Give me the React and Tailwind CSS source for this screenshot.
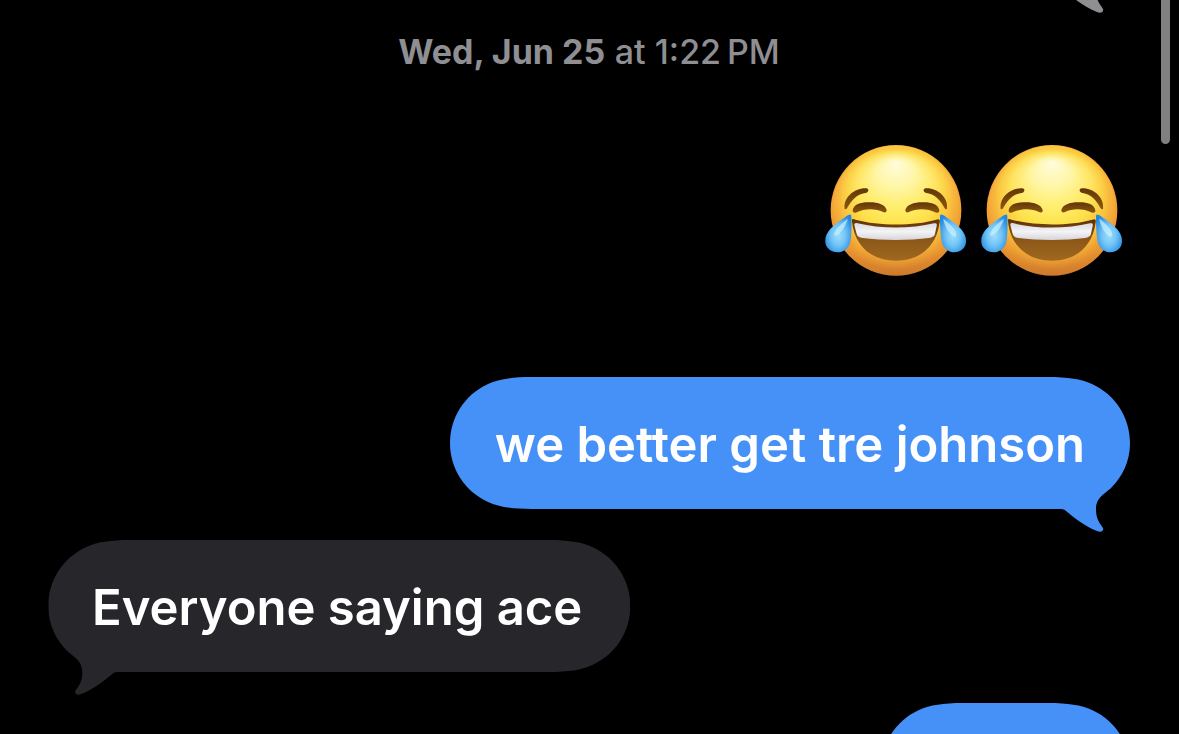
import clsx from 'clsx';

const messages = [
  { id: 1, text: 'we better get tre johnson', sent: true, tail: true },
  { id: 2, text: 'Everyone saying ace', sent: false, tail: true },
  { id: 3, text: '', sent: true, tail: false },
];

function RoundCap({ className }) {
  return (
    <svg viewBox="0 0 88 132" aria-hidden="true" className={clsx('absolute top-0 h-[132px] w-[88px] fill-current', className)}>
      <path d="M88 0H82C62 0 49 2 38 7C14 18 0 41 0 66C0 91 14 114 38 125C49 130 62 132 82 132H88Z" />
    </svg>
  );
}

function TailCap({ className }) {
  return (
    <svg viewBox="0 0 88 156" aria-hidden="true" className={clsx('absolute top-0 h-[156px] w-[88px] fill-current', className)}>
      <path d="M0 0H6C26 0 39 2 50 7C74 18 88 41 88 66C88 85 80 100 69 111C64 116 54 120 54 132C54 143 58 146 61 151C62 154 59 156 55 154C42 149 30 139 24 134C22 132 20 132 16 132H0Z" />
    </svg>
  );
}

function Bubble({ text, sent, tail, className }) {
  return (
    <div className={clsx('relative h-[132px] w-fit min-w-[249px]', sent ? 'px-[45px]' : 'pr-12 pl-11', className)}>
      <div className={clsx('absolute inset-0', !sent && '-scale-x-100')}>
        <RoundCap className="left-0" />
        <div className="absolute inset-x-[87px] inset-y-0 bg-current" />
        {tail ? <TailCap className="right-0" /> : <RoundCap className="right-0 -scale-x-100" />}
      </div>
      <p className="relative pt-9 text-[49px] leading-[64px] font-semibold whitespace-nowrap text-white">{text}</p>
    </div>
  );
}

function JoyEmoji() {
  return (
    <svg viewBox="29 41 432 399" role="img" aria-label="Face with tears of joy" className="h-[133px] w-36">
      <defs>
        <linearGradient id="face" x1="0" y1="0" x2="0" y2="1">
          <stop offset="0" stopColor="#f9b440" />
          <stop offset="0.45" stopColor="#f3a136" />
          <stop offset="0.8" stopColor="#e8922f" />
          <stop offset="1" stopColor="#cf7a2c" />
        </linearGradient>
        <radialGradient id="glow" cx="0.5" cy="0.42" r="0.56">
          <stop offset="0" stopColor="#ffe845" />
          <stop offset="0.5" stopColor="#fddc42" />
          <stop offset="0.75" stopColor="#fbc83f" stopOpacity="0.9" />
          <stop offset="1" stopColor="#f4aa38" stopOpacity="0" />
        </radialGradient>
        <radialGradient id="shine" cx="0.5" cy="0.5" r="0.5" fx="0.5" fy="0.16">
          <stop offset="0" stopColor="#fffce0" />
          <stop offset="0.35" stopColor="#fff8b0" stopOpacity="0.9" />
          <stop offset="0.7" stopColor="#fff077" stopOpacity="0.6" />
          <stop offset="1" stopColor="#ffe550" stopOpacity="0" />
        </radialGradient>
        <linearGradient id="brown" x1="0" y1="0" x2="0" y2="1">
          <stop offset="0" stopColor="#623607" />
          <stop offset="1" stopColor="#8b570f" />
        </linearGradient>
        <linearGradient id="mouth" x1="0" y1="0" x2="0" y2="1">
          <stop offset="0" stopColor="#5c3008" />
          <stop offset="0.5" stopColor="#8c5718" />
          <stop offset="1" stopColor="#a0681f" />
        </linearGradient>
        <linearGradient id="teeth" x1="0" y1="0" x2="0" y2="1">
          <stop offset="0" stopColor="#d9d9df" />
          <stop offset="0.5" stopColor="#f4f4f6" />
          <stop offset="1" stopColor="#d6d4da" />
        </linearGradient>
        <radialGradient id="tear" cx="0.5" cy="0.55" r="0.6">
          <stop offset="0" stopColor="#9edefb" />
          <stop offset="0.45" stopColor="#73c5f7" />
          <stop offset="1" stopColor="#2388df" />
        </radialGradient>
      </defs>
      <circle cx="245" cy="240" r="196" fill="url(#face)" />
      <circle cx="245" cy="236" r="190" fill="url(#glow)" />
      <ellipse cx="245" cy="184" rx="170" ry="130" fill="url(#shine)" />
      <g fill="url(#brown)">
        <path d="M91 235C86 202 121 172 156 174C164 175 164 184 157 187C127 190 111 210 98 234C96 237 92 238 91 235Z" />
        <path d="M398 235C403 202 369 172 334 174C326 175 326 184 333 187C362 190 379 210 391 234C393 237 397 238 398 235Z" />
        <path d="M115 240C118 220 143 215 166 216C192 216 213 224 217 239C218 246 211 248 206 245C182 233 151 234 124 247C119 249 114 246 115 240Z" />
        <path d="M375 240C372 220 347 215 324 216C298 216 277 224 273 239C272 246 279 248 284 245C308 233 339 234 366 247C371 249 376 246 375 240Z" />
      </g>
      <path d="M113 274C111 267 115 264 123 268C192 287 300 287 366 268C374 264 378 268 376 276C366 352 314 391 245 391C176 391 122 352 113 274Z" fill="url(#mouth)" />
      <path d="M120 285C119 279 123 277 130 279C197 296 291 296 359 279C366 277 369 280 367 287L361 314C358 320 350 322 344 323C287 331 201 331 144 323C135 321 129 319 127 311Z" fill="url(#teeth)" />
      <g fill="url(#tear)">
        <path d="M105 253C109 251 111 254 111 259C112 284 112 312 108 334C101 371 50 377 35 345C24 310 56 286 84 266C94 258 99 255 105 253Z" />
        <path d="M383 253C379 251 377 254 377 259C377 284 378 312 382 334C390 371 439 377 453 345C464 310 432 286 404 266C394 258 389 255 383 253Z" />
      </g>
      <g fill="#c9f1fd" opacity="0.7">
        <path d="M101 265C94 286 79 313 61 317C54 305 76 283 101 265Z" />
        <path d="M387 265C390 286 403 313 423 320C433 306 411 283 387 265Z" />
      </g>
    </svg>
  );
}

export default function App() {
  return (
    <main className="relative h-screen overflow-hidden bg-black pr-[49px] pl-12 font-['Inter',sans-serif]">
      {/* Previous message, mostly scrolled away */}
      <Bubble sent tail className="-mt-[142px] ml-auto text-[#8e8e93]" />

      <time className="mt-10 block text-center text-[34px] leading-[44px] text-[#8e8e93]">
        <span className="font-bold">Wed, Jun 25</span>{' '}
        <span className="font-medium">at 1:22{'\u202f'}PM</span>
      </time>

      <div className="mt-[70px] flex justify-end gap-3 pr-1.5">
        <JoyEmoji />
        <JoyEmoji />
      </div>

      <div className="mt-[100px] flex flex-col gap-[31px]">
        {messages.map((msg) => (
          <Bubble
            key={msg.id}
            {...msg}
            className={msg.sent ? 'self-end text-[#4691f7]' : 'self-start text-[#27262b]'}
          />
        ))}
      </div>

      {/* Scroll indicator */}
      <div className="absolute top-0 right-[9px] h-36 w-[9px] rounded-b-full bg-[#808080]" />
    </main>
  );
}
